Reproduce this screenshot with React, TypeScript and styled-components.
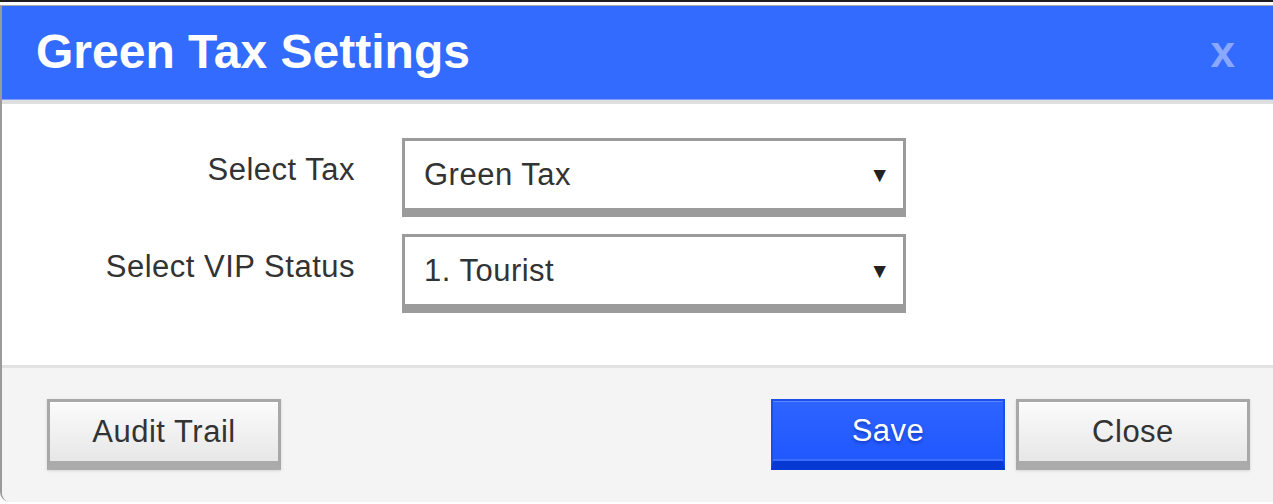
import React, { useState } from 'react';
import styled, { createGlobalStyle } from 'styled-components';

const GlobalStyle = createGlobalStyle`
	html, body {
		margin: 0;
		padding: 0;
		background: #ffffff;
		overflow: hidden;
	}
	body {
		font-family: "Liberation Sans", Arial, sans-serif;
	}
`;

const Page = styled.div`
	border-top: 2px solid #1e1e1e;
	padding-top: 3px;
	height: 504px;
	box-sizing: border-box;
	background: #ffffff;
`;

const Dialog = styled.div`
	display: flex;
	flex-direction: column;
	border-top: 1px solid #a9a9a9;
	border-left: 2px solid #9a9a9a;
	border-bottom-left-radius: 10px;
	overflow: hidden;
	height: 497px;
	box-sizing: border-box;
`;

const Header = styled.div`
	display: flex;
	align-items: center;
	justify-content: space-between;
	height: 98px;
	box-sizing: border-box;
	padding: 0 38px 3px 34px;
	background: #336bff;
	border-bottom: 4px solid #dedede;
	box-shadow: inset 0 -1px 0 #7c9dff;
`;

const Title = styled.h1`
	margin: 0;
	font-size: 48px;
	line-height: 1;
	font-weight: bold;
	color: #ffffff;
`;

const CloseX = styled.span`
	font-size: 44px;
	font-weight: bold;
	line-height: 1;
	color: #8aa8ff;
	cursor: pointer;
`;

const Body = styled.div`
	display: grid;
	grid-template-columns: 353px 504px;
	column-gap: 47px;
	row-gap: 17px;
	align-content: start;
	height: 261px;
	box-sizing: border-box;
	padding-top: 34px;
	background: #ffffff;
`;

const Label = styled.label<{ $offset: number }>`
	padding-top: ${p => p.$offset}px;
	text-align: right;
	font-size: 31px;
	letter-spacing: 0.5px;
	line-height: 36px;
	color: #333333;
`;

const SelectWrap = styled.div`
	position: relative;
`;

const Select = styled.select`
	appearance: none;
	-webkit-appearance: none;
	width: 100%;
	height: 79px;
	box-sizing: border-box;
	margin: 0;
	padding: 0 50px 0 19px;
	border: 3px solid #9b9b9b;
	border-bottom-width: 9px;
	border-radius: 0;
	background: #ffffff;
	font-family: "Liberation Sans", Arial, sans-serif;
	font-size: 31px;
	letter-spacing: 0.5px;
	color: #333333;
	outline: none;
`;

const Arrow = styled.span`
	position: absolute;
	right: 16px;
	top: 26px;
	font-size: 21px;
	line-height: 1;
	color: #222222;
	pointer-events: none;
`;

const Footer = styled.div`
	flex: 1;
	display: flex;
	align-items: flex-start;
	gap: 11px;
	padding: 31px 23px 0 45px;
	background: #f4f4f4;
	border-top: 3px solid #e2e2e2;
`;

const Spacer = styled.div`
	flex: 1;
`;

const Button = styled.button<{ $primary?: boolean }>`
	width: 234px;
	height: 71px;
	box-sizing: border-box;
	margin: 0;
	padding: 0;
	border-radius: 0;
	font-family: "Liberation Sans", Arial, sans-serif;
	font-size: 31px;
	letter-spacing: 0.5px;
	cursor: pointer;
	border: ${p => (p.$primary ? '2px solid #1c4fea' : '3px solid #a8a8a8')};
	border-bottom: ${p => (p.$primary ? '9px solid #0639d4' : '9px solid #ababab')};
	color: ${p => (p.$primary ? '#ffffff' : '#333333')};
	text-shadow: ${p => (p.$primary ? '0 2px 3px rgba(0, 20, 120, 0.45)' : 'none')};
	background: ${p =>
		p.$primary
			? 'linear-gradient(#2e63ff, #1f58ff)'
			: 'linear-gradient(#fbfbfb, #e7e7e7)'};
	box-shadow: ${p =>
		p.$primary
			? 'inset 0 1px 0 #5a86ff, inset 0 -2px 0 #3c6cff'
			: '0 1px 3px rgba(0, 0, 0, 0.12), inset 0 1px 0 #ffffff'};
`;

const taxes = ['Green Tax', 'City Tax', 'Tourist Tax'];
const statuses = ['1. Tourist', '2. Resident', '3. VIP'];

export default function App() {
	const [tax, setTax] = useState(taxes[0]);
	const [status, setStatus] = useState(statuses[0]);

	return (
		<>
			<GlobalStyle />
			<Page>
				<Dialog>
					<Header>
						<Title>Green Tax Settings</Title>
						<CloseX>x</CloseX>
					</Header>
					<Body>
						<Label $offset={14}>Select Tax</Label>
						<SelectWrap>
							<Select value={tax} onChange={e => setTax(e.target.value)}>
								{taxes.map(t => (
									<option key={t}>{t}</option>
								))}
							</Select>
							<Arrow>▼</Arrow>
						</SelectWrap>
						<Label $offset={15}>Select VIP Status</Label>
						<SelectWrap>
							<Select value={status} onChange={e => setStatus(e.target.value)}>
								{statuses.map(s => (
									<option key={s}>{s}</option>
								))}
							</Select>
							<Arrow>▼</Arrow>
						</SelectWrap>
					</Body>
					<Footer>
						<Button>Audit Trail</Button>
						<Spacer />
						<Button $primary>Save</Button>
						<Button>Close</Button>
					</Footer>
				</Dialog>
			</Page>
		</>
	);
}
